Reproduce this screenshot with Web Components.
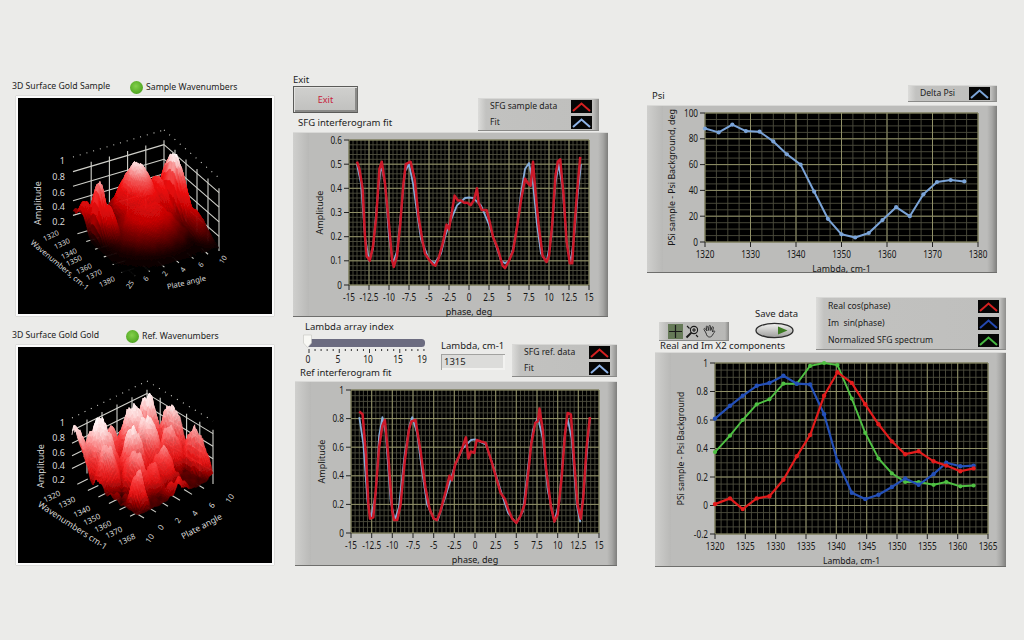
<!DOCTYPE html>
<html>
<head>
<meta charset="utf-8">
<title>SFG front panel</title>
<style>
    html, body { margin: 0; height: 100%; overflow: hidden; background: #ebebe9; }
    body { font: 9.5px "Noto Sans", sans-serif; color: #1c1c1c; }
    .head { display: flex; }
    .stack { display: flex; flex-direction: column; }
</style>
</head>
<body>
<front-panel>
    <div slot="left" class="stack">
        <surface-plot name="sample" heading="3D Surface Gold Sample" led="Sample Wavenumbers" style="--led-at: 118px"></surface-plot>
        <surface-plot name="ref" heading="3D Surface Gold Gold" led="Ref. Wavenumbers" style="--led-at: 114px; margin-top: 11px"></surface-plot>
    </div>
    <div slot="middle" class="stack">
        <div class="head" style="width: 306px; height: 58px; justify-content: space-between">
            <div class="stack">
                <panel-label>Exit</panel-label>
                <exit-button>Exit</exit-button>
                <panel-label style="margin: 4px 0 0 5px">SFG interferogram fit</panel-label>
            </div>
            <graph-legend items="SFG sample data:#d42020,Fit:#8fb4e8" style="width: 121px; height: 33px; margin-top: 24px"></graph-legend>
        </div>
        <xy-graph name="sfg" style="width: 315px; height: 185px"></xy-graph>
        <div class="head" style="margin: 2px 0 0 2px; width: 322px; height: 62px">
            <div class="stack" style="width: 146px">
                <panel-label style="margin: 2px 0 0 10px">Lambda array index</panel-label>
                <index-slider style="margin: 1px 0 0 8px"></index-slider>
                <panel-label style="margin: 2px 0 0 5px">Ref interferogram fit</panel-label>
            </div>
            <numeric-box label="Lambda, cm-1" value="1315" style="margin-top: 21px"></numeric-box>
            <graph-legend items="SFG ref. data:#d42020,Fit:#8fb4e8" style="width: 105px; height: 33px; margin: 25px 0 0 7px"></graph-legend>
        </div>
        <xy-graph name="ref" style="width: 322px; height: 185px; margin-left: 2px"></xy-graph>
    </div>
    <div slot="right" class="stack">
        <div class="head" style="width: 350px; height: 20px; justify-content: space-between; align-items: flex-end">
            <panel-label style="margin-left: 5px; position: relative; top: -3px">Psi</panel-label>
            <graph-legend items="Delta Psi:#7ba4d8" style="width: 89px; height: 17px; margin-bottom: 3px"></graph-legend>
        </div>
        <xy-graph name="psi" style="width: 350px; height: 168px"></xy-graph>
        <div class="head" style="margin: 24px 0 0 8px; width: 351px; height: 55px; justify-content: space-between">
            <div class="stack" style="justify-content: flex-end">
                <div class="head">
                    <graph-palette style="margin: 13px 0 0 4px"></graph-palette>
                    <save-toggle style="margin: 0 0 0 26px">Save data</save-toggle>
                </div>
                <panel-label style="margin: -1px 0 0 5px">Real and Im X2 components</panel-label>
            </div>
            <graph-legend items="Real cos(phase):#d42020,Im  sin(phase):#2448b0,Normalized SFG spectrum:#46b840" style="width: 190px; height: 53px"></graph-legend>
        </div>
        <xy-graph name="x2" style="width: 351px; height: 215px; margin-left: 8px"></xy-graph>
    </div>
</front-panel>

<script>
const RED = '#cc1a2a';
const LIGHT_BLUE = '#86add9';

function zip(xs, ys) {
    return xs.map((x, i) => [x, ys[i]]);
}

const sfgRed = [[-14,.51],[-13.7,.48],[-13.3,.4],[-13,.2],[-12.8,.12],[-12.4,.1],[-12,.16],[-11.6,.28],[-11.2,.48],[-10.9,.51],[-10.5,.42],[-10,.25],[-9.6,.1],[-9.4,.075],[-9,.12],[-8.6,.25],[-8.2,.42],[-7.9,.5],[-7.3,.51],[-6.8,.44],[-6.3,.28],[-5.8,.18],[-5.5,.13],[-5,.105],[-4.5,.085],[-4.2,.08],[-3.8,.11],[-3.3,.17],[-2.8,.25],[-2.5,.23],[-2.2,.29],[-1.8,.37],[-1.4,.35],[-1,.35],[-.6,.34],[-.2,.34],[.2,.33],[.6,.35],[1,.4],[1.2,.34],[1.6,.31],[2.2,.31],[2.6,.26],[3,.2],[3.6,.15],[4.2,.08],[4.5,.07],[5,.1],[5.5,.14],[6,.24],[6.5,.35],[7,.44],[7.4,.42],[7.7,.41],[8,.51],[8.3,.39],[8.7,.25],[9.2,.12],[9.7,.095],[10,.12],[10.4,.25],[10.8,.45],[11.1,.51],[11.4,.52],[11.8,.38],[12.2,.18],[12.6,.09],[12.9,.09],[13.2,.25],[13.5,.38],[13.9,.53]];
const sfgFit = [[-14,.5],[-13.5,.42],[-13,.2],[-12.5,.1],[-12,.15],[-11.5,.34],[-11,.5],[-10.5,.42],[-10,.2],[-9.5,.09],[-9,.14],[-8.5,.3],[-8,.47],[-7.5,.5],[-7,.42],[-6.5,.3],[-6,.19],[-5,.105],[-4.3,.09],[-3.5,.13],[-3,.2],[-2.5,.25],[-1.5,.33],[-.5,.36],[0,.362],[.5,.36],[1.5,.33],[2.5,.25],[3.2,.18],[4,.1],[4.5,.09],[5,.1],[5.5,.15],[6,.24],[6.5,.38],[7,.48],[7.5,.505],[8,.42],[8.5,.25],[9,.13],[9.7,.095],[10.3,.2],[10.8,.42],[11.2,.5],[11.7,.4],[12.2,.18],[12.7,.09],[13.2,.22],[13.6,.38],[14,.5]];
const refRed = [[-14,.85],[-13.6,.83],[-13.2,.55],[-12.9,.2],[-12.7,.1],[-12.3,.11],[-12,.3],[-11.6,.6],[-11.2,.75],[-10.9,.79],[-10.5,.55],[-10,.15],[-9.8,.09],[-9.4,.09],[-9,.2],[-8.5,.5],[-8,.72],[-7.7,.78],[-7.2,.79],[-6.6,.58],[-6,.32],[-5.5,.17],[-5,.1],[-4.6,.09],[-4.2,.15],[-3.5,.3],[-3.1,.4],[-2.8,.37],[-2.4,.48],[-2,.53],[-1.5,.6],[-1.1,.67],[-.8,.52],[-.5,.57],[-.1,.56],[.2,.65],[.7,.64],[1.3,.63],[2,.5],[2.5,.4],[3.1,.28],[3.6,.24],[4,.17],[4.5,.1],[5,.07],[5.5,.12],[6,.2],[6.5,.45],[6.8,.62],[7.3,.77],[7.6,.78],[7.8,.87],[8.2,.72],[8.6,.45],[9.2,.18],[9.6,.08],[10,.13],[10.5,.4],[10.9,.7],[11.2,.84],[11.6,.83],[12,.5],[12.4,.2],[12.8,.1],[13.1,.25],[13.5,.6],[13.9,.81]];
const refFit = [[-14,.81],[-13.5,.62],[-13,.22],[-12.6,.1],[-12,.28],[-11.6,.68],[-11.2,.81],[-10.8,.7],[-10.2,.22],[-9.7,.09],[-9.2,.18],[-8.5,.55],[-7.9,.76],[-7.6,.81],[-7,.7],[-6.4,.43],[-5.8,.2],[-5,.1],[-4.5,.09],[-3.5,.27],[-2.5,.46],[-1.5,.59],[-.5,.65],[0,.655],[.5,.64],[1.3,.62],[2.2,.47],[3.2,.28],[4,.14],[5,.07],[5.8,.15],[6.5,.5],[7,.72],[7.6,.81],[8.2,.66],[8.8,.3],[9.6,.08],[10.2,.22],[10.8,.66],[11.2,.8],[11.7,.66],[12.3,.2],[12.7,.08],[13.2,.32],[13.9,.81]];
const psi = zip([1320,1323,1326,1329,1332,1335,1338,1341,1344,1347,1350,1353,1356,1359,1362,1365,1368,1371,1374,1377],
    [88,85,91,86,85.5,78,68,60,39,18,6,3.5,7,17,27,20,37,46.5,48,47]);
const x2Xs = [195,240,278,320,358,400,440,480,522,562,605,645,685,725,765,805,850,888,930,970].map(p => 1320 + (p - 195) * 45 / 818);
const x2Green = zip(x2Xs, [.375,.49,.6,.71,.745,.855,.855,.98,1,.985,.75,.51,.33,.225,.165,.165,.145,.165,.135,.14]);
const x2Blue = zip(x2Xs, [.61,.7,.77,.84,.86,.91,.855,.85,.64,.31,.09,.045,.075,.13,.19,.145,.22,.3,.275,.28]);
const x2Red = zip(x2Xs, [.01,.05,-.025,.05,.065,.18,.345,.495,.77,.935,.86,.71,.57,.45,.36,.38,.31,.28,.24,.26]);

const GRAPHS = {
    sfg: {
        plot: [56, 7, 240, 145], x: [-15, 15, 2.5, .5], y: [0, .6, .1, .02],
        xlabel: 'phase, deg', ylabel: 'Amplitude', ylabelAt: 26, capSize: 9,
        series: [{ color: LIGHT_BLUE, width: 1.8, points: sfgFit }, { color: RED, width: 2.5, points: sfgRed }]
    },
    ref: {
        plot: [56, 8, 248, 143], x: [-15, 15, 2.5, .5], y: [0, 1, .2, .04],
        xlabel: 'phase, deg', ylabel: 'Amplitude', ylabelAt: 26, capSize: 9,
        series: [{ color: LIGHT_BLUE, width: 1.8, points: refFit }, { color: RED, width: 2.5, points: refRed }]
    },
    psi: {
        plot: [58, 7, 273, 129], x: [1320, 1380, 10, 2.5], y: [0, 100, 20, 5],
        xlabel: 'Lambda, cm-1', ylabel: 'PSi sample - Psi Background, deg', ylabelAt: 30, capSize: 8.8,
        series: [{ color: '#7ba4d8', width: 2, dot: 2.1, points: psi }]
    },
    x2: {
        plot: [60, 10, 273, 171], x: [1320, 1365, 5, 1], y: [-.2, 1, .2, .05],
        xlabel: 'Lambda, cm-1', ylabel: 'PSi sample - Psi Background', ylabelAt: 31, capSize: 8.6,
        series: [
            { color: '#4fc043', width: 1.9, dot: 2.1, points: x2Green },
            { color: '#2450b8', width: 2.2, dot: 2.2, points: x2Blue },
            { color: '#e21c1c', width: 2.2, dot: 2.2, points: x2Red }
        ]
    }
};

// surface geometry is in page pixels: L = left base corner, U/V = base edge vectors, H = height scale
const SURFACES = {
    sample: {
        box: [16, 96],
        L: [73, 230], U: [55, 48], V: [91, -27], H: 75, wall: 73,
        stops: [[0, 0, 0, 0], [.08, 26, 0, 0], [.2, 105, 0, 0], [.36, 205, 6, 6], [.54, 240, 20, 20], [.7, 244, 95, 95], [.84, 252, 215, 215], [.94, 255, 255, 255], [1, 255, 255, 255]],
        noise: .008, spikes: .025, floor: .015,
        peaks: [
            [.02, .02, .26, .12, .1], [.14, .05, .46, .1, .07], [.3, .11, .78, .12, .045],
            [.36, .17, .5, .14, .05], [.27, .55, .85, .2, .15], [.5, .52, .48, .22, .24],
            [.36, .9, .92, .2, .055], [.3, .76, .62, .2, .06], [.62, .93, .36, .2, .08]
        ],
        zText: [['1', 161], ['0.8', 177], ['0.6', 193], ['0.4', 207], ['0.2', 222]],
        zEnd: 65, amp: [41, 203],
        tick: 7.2, cap: 7.6,
        uText: [['1320', 52, 235], ['1330', 63, 243], ['1340', 70, 253], ['1350', 75, 260], ['1360', 85, 268], ['1370', 95, 274], ['1380', 108, 281]],
        uLabel: ['Wavenumbers, cm-1', 58, 264, 40],
        vText: [['25', 132, 283], ['6', 148, 277], ['2', 167, 272], ['4', 185, 268], ['6', 203, 263], ['10', 225, 258]],
        vLabel: ['Plate angle', 187, 282, -13]
    },
    ref: {
        box: [16, 346],
        L: [72, 482], U: [66, 40], V: [75, -37], H: 72, wall: 63,
        stops: [[0, 6, 0, 0], [.06, 50, 0, 0], [.14, 150, 4, 4], [.26, 232, 22, 22], [.4, 246, 60, 60], [.56, 250, 140, 140], [.72, 255, 222, 222], [.9, 255, 250, 250], [1, 255, 255, 255]],
        noise: .022, spikes: .05, floor: .16,
        peaks: [
            [.05, .02, .72, .14, .1], [.2, .2, .84, .15, .12], [.2, .65, .8, .13, .12], [.15, .88, .82, .13, .07],
            [.4, .99, .74, .16, .07], [.75, 1, .62, .16, .06], [.4, .12, .66, .1, .08], [.45, .42, .76, .1, .1],
            [.4, .65, .76, .14, .11], [.7, .6, .52, .1, .09], [.85, .13, .56, .07, .06], [.52, .85, .62, .11, .08],
            [.63, .3, .6, .13, .08], [.1, .42, .56, .1, .1], [.75, .42, .44, .09, .07], [.95, .55, .26, .07, .12]
        ],
        zText: [['1', 424], ['0.8', 439], ['0.6', 454], ['0.4', 467], ['0.2', 481]],
        zEnd: 65, amp: [44, 467],
        tick: 7.8, cap: 8.6,
        uText: [['1320', 53, 497], ['1330', 68, 503], ['1340', 83, 512], ['1350', 93, 520], ['1360', 104, 527], ['1370', 115, 533], ['1368', 128, 540]],
        uLabel: ['Wavenumbers cm-1', 71, 526, 33],
        vText: [['10', 152, 538], ['0', 163, 527], ['2', 180, 520], ['4', 197, 513], ['6', 214, 505], ['10', 232, 498]],
        vLabel: ['Plate angle', 203, 527, -28]
    }
};

class FrontPanel extends HTMLElement {
    constructor() {
        super();
        this.attachShadow({ mode: 'open' });
        this.shadowRoot.innerHTML = `
            <style>
                :host { display: grid; grid-template-columns: 281px 354px auto; padding-left: 12px; }
                .left { padding-top: 78px; }
                .middle { padding-top: 74px; }
                .right { padding-top: 85px; }
            </style>
            <div class="left"><slot name="left"></slot></div>
            <div class="middle"><slot name="middle"></slot></div>
            <div class="right"><slot name="right"></slot></div>
        `;
    }
}

class PanelLabel extends HTMLElement {
    constructor() {
        super();
        this.attachShadow({ mode: 'open' });
        this.shadowRoot.innerHTML = `
            <style>
                :host { display: block; height: 12px; line-height: 12px; white-space: nowrap; }
            </style>
            <slot></slot>
        `;
    }
}

class SurfacePlot extends HTMLElement {
    constructor() {
        super();
        this.attachShadow({ mode: 'open' });
    }

    heightAt(s, u, v) {
        let z = s.floor * (1 - u * .5);
        for (const [pu, pv, pz, su, sv] of s.peaks) {
            const d = ((u - pu) / su) ** 2 + ((v - pv) / sv) ** 2;
            z = Math.max(z, pz * Math.exp(-d / 2));
        }
        const h = Math.sin(u * 311.7 + v * 127.1) * 43758.5453;
        const r = h - Math.floor(h);
        const wob = Math.sin(u * 31 + 1.3) * Math.sin(v * 37 + .4) + Math.sin(u * 57 + v * 61) * .6;
        return Math.max(0, z + z * (r - .5) * s.spikes * 2 + wob * s.noise * (z > .1 ? 1.6 : .3));
    }

    colorAt(s, z) {
        const stops = s.stops;
        for (let i = 1; i < stops.length; i++) {
            if (z <= stops[i][0]) {
                const a = stops[i - 1], b = stops[i];
                const t = (z - a[0]) / (b[0] - a[0]);
                return [1, 2, 3].map(k => a[k] + (b[k] - a[k]) * t);
            }
        }
        return stops[stops.length - 1].slice(1);
    }

    project(s, u, v, z) {
        return [s.L[0] + s.U[0] * u + s.V[0] * v, s.L[1] + s.U[1] * u + s.V[1] * v - s.H * z];
    }

    getSurface(s) {
        const N = 72;
        const grid = [];
        for (let i = 0; i <= N; i++) {
            grid.push([]);
            for (let j = 0; j <= N; j++) grid[i].push(this.heightAt(s, i / N, j / N));
        }
        let out = '';
        for (let j = N - 1; j >= 0; j--) {
            for (let i = 0; i < N; i++) {
                const z = (grid[i][j] + grid[i + 1][j] + grid[i][j + 1] + grid[i + 1][j + 1]) / 4;
                const pts = [[i, j], [i + 1, j], [i + 1, j + 1], [i, j + 1]]
                    .map(([a, b]) => this.project(s, a / N, b / N, grid[a][b]).map(n => n.toFixed(1)).join(','));
                // slopes facing the viewer fall a little darker
                const slope = (grid[i][j] - grid[i + 1][j]) * N * .04;
                const shade = Math.min(1.05, Math.max(.72, 1 - slope * .35));
                const c = this.colorAt(s, z).map((n, k) => Math.round(k === 0 ? n * (shade * .35 + .65) : n * shade));
                const fill = `rgb(${c.join(',')})`;
                out += `<polygon points="${pts.join(' ')}" fill="${fill}" stroke="${fill}" stroke-width=".5"/>`;
            }
        }
        return out;
    }

    getBox(s) {
        const top = (u, v) => {
            const p = this.project(s, u, v, 0);
            return [p[0], p[1] - s.wall];
        };
        const base = (u, v) => this.project(s, u, v, 0);
        const seg = (a, b, extra = '') => `<line x1="${a[0]}" y1="${a[1]}" x2="${b[0]}" y2="${b[1]}" ${extra}/>`;
        const dotted = 'stroke-dasharray="1 6" stroke-width="1.3"';
        const drop = s.wall / 5;
        let out = '';
        // back walls: u = 0 runs from the left corner to the far corner, v = 1 from the far corner to the right
        for (let t = .2; t <= 1.01; t += .2) {
            out += seg([top(0, t)[0], top(0, t)[1] + drop * .7], base(0, t));
            out += seg([top(t, 1)[0], top(t, 1)[1] + drop * .7], base(t, 1));
        }
        for (let k = 1; k < 5; k++) {
            const d = k * drop;
            const a = top(0, 0), b = top(0, 1), c = top(1, 1);
            out += seg([a[0], a[1] + d], [b[0], b[1] + d]);
            out += seg([b[0], b[1] + d], [c[0], c[1] + d]);
        }
        out += seg(top(0, 0), top(0, 1), dotted + ' stroke="#bbb"');
        out += seg(top(0, 1), top(1, 1), dotted + ' stroke="#bbb"');
        // short floor dashes along both front edges
        for (let t = .08; t < 1; t += .16) {
            out += seg(base(t, 0), base(t, .14));
            out += seg(base(1, t), base(.88, t));
        }
        return out;
    }

    getLabels(s) {
        let out = '';
        for (const [t, y] of s.zText) {
            out += `<text x="${s.zEnd}" y="${y + 3}" text-anchor="end">${t}</text>`;
        }
        out += `<text transform="translate(${s.amp[0]} ${s.amp[1]}) rotate(-90)" text-anchor="middle" font-size="8">Amplitude</text>`;
        for (const [t, x, y] of s.uText) {
            out += `<text transform="translate(${x} ${y + 3}) rotate(-25)" text-anchor="middle" style="font-size:${s.tick}px">${t}</text>`;
        }
        for (const [t, x, y] of s.vText) {
            out += `<text transform="translate(${x} ${y + 3}) rotate(-55)" text-anchor="middle" style="font-size:${s.tick}px">${t}</text>`;
        }
        for (const [t, x, y, a] of [s.uLabel, s.vLabel]) {
            out += `<text transform="translate(${x} ${y + 3}) rotate(${a})" text-anchor="middle" style="font-size:${s.cap}px">${t}</text>`;
        }
        return out;
    }

    connectedCallback() {
        const s = SURFACES[this.getAttribute('name')];
        this.shadowRoot.innerHTML = `
            <style>
                :host { display: block; width: 262px; font-size: 8.7px; }
                .top { display: flex; align-items: center; height: 18px; line-height: 12px; white-space: nowrap; }
                .title { width: var(--led-at); position: relative; top: -1px; }
                .led {
                    width: 13px; height: 13px; border-radius: 50%; margin-right: 3px;
                    background: radial-gradient(circle at 45% 40%, #84d04c, #58ad28 60%, #3f8a1c);
                }
                .screen {
                    margin-left: 4px; width: 254px; height: 216px; border: 2px solid #fbfbfb;
                    box-shadow: 0 0 1px #9a9a98; background: #000;
                }
                svg { display: block; }
                text { font: 9px "Noto Sans", sans-serif; fill: #d8d8d8; }
                .box line { stroke: #d0d0ca; stroke-width: 1.1; }
            </style>
            <div class="top">
                <span class="title">${this.getAttribute('heading')}</span>
                <span class="led"></span>
                <span>${this.getAttribute('led')}</span>
            </div>
            <div class="screen">
                <svg width="254" height="216" viewBox="${s.box[0] + 2} ${s.box[1] + 2} 254 216">
                    <defs><filter id="soft" x="-5%" y="-5%" width="110%" height="110%"><feGaussianBlur stdDeviation=".55"/></filter></defs>
                    <g class="box">${this.getBox(s)}</g>
                    <g filter="url(#soft)">${this.getSurface(s)}</g>
                    <g>${this.getLabels(s)}</g>
                </svg>
            </div>
        `;
    }
}

class XyGraph extends HTMLElement {
    constructor() {
        super();
        this.attachShadow({ mode: 'open' });
    }

    getTicks(from, to, step) {
        const out = [];
        const n = Math.round((to - from) / step);
        for (let i = 0; i <= n; i++) out.push(+(from + i * step).toFixed(4));
        return out;
    }

    getGrid(g, sx, sy, l, t, w, h) {
        const [xmin, xmax, xmaj, xmin2] = g.x;
        const [ymin, ymax, ymaj, ymin2] = g.y;
        let minor = '', major = '', ticks = '', labels = '';
        for (const x of this.getTicks(xmin, xmax, xmin2)) {
            minor += `M${sx(x).toFixed(1)} ${t}v${h}`;
        }
        for (const y of this.getTicks(ymin, ymax, ymin2)) {
            minor += `M${l} ${sy(y).toFixed(1)}h${w}`;
        }
        // number labels are a condensed face in the reference, so squeeze them sideways
        for (const x of this.getTicks(xmin, xmax, xmaj)) {
            major += `M${sx(x).toFixed(1)} ${t}v${h}`;
            ticks += `M${sx(x).toFixed(1)} ${t + h}v5`;
            labels += `<text transform="translate(${sx(x).toFixed(1)} ${t + h + 16}) scale(.78 1)" text-anchor="middle">${x}</text>`;
        }
        for (const y of this.getTicks(ymin, ymax, ymaj)) {
            major += `M${l} ${sy(y).toFixed(1)}h${w}`;
            ticks += `M${l} ${sy(y).toFixed(1)}h-5`;
            labels += `<text transform="translate(${l - 7} ${(sy(y) + 3.5).toFixed(1)}) scale(.78 1)" text-anchor="end">${y}</text>`;
        }
        return `
            <rect x="${l}" y="${t}" width="${w}" height="${h}" fill="#000"/>
            <path d="${minor}" stroke="#4e4e3e" stroke-width=".9" fill="none"/>
            <path d="${major}" stroke="#8f8f66" stroke-width="1" fill="none"/>
            <path d="${ticks}" stroke="#222" stroke-width="1" fill="none"/>
            ${labels}
        `;
    }

    getSeries(g, sx, sy) {
        return g.series.map(s => {
            const pts = s.points.map(([x, y]) => [sx(x).toFixed(1), sy(y).toFixed(1)]);
            const dots = s.dot ? pts.map(p => `<circle cx="${p[0]}" cy="${p[1]}" r="${s.dot}" fill="${s.color}"/>`).join('') : '';
            return `<polyline points="${pts.map(p => p.join(',')).join(' ')}" fill="none" stroke="${s.color}"
                stroke-width="${s.width}" stroke-linejoin="round"/>${dots}`;
        }).join('');
    }

    connectedCallback() {
        const g = GRAPHS[this.getAttribute('name')];
        const [l, t, w, h] = g.plot;
        const sx = x => l + (x - g.x[0]) / (g.x[1] - g.x[0]) * w;
        const sy = y => t + h - (y - g.y[0]) / (g.y[1] - g.y[0]) * h;
        this.shadowRoot.innerHTML = `
            <style>
                :host { display: block; }
                .frame {
                    height: 100%; box-sizing: border-box; border-top: 1px solid #d9d9d7; border-bottom: 1px solid #6e6e6c;
                    background:
                        linear-gradient(to right, #cfcfcd 0, #b9b9b7 16px, transparent 16px),
                        linear-gradient(to left, #7e7e7c 0, #a6a6a4 5px, #bcbcba 10px, transparent 10px),
                        #bcbcba;
                }
                svg { display: block; width: 100%; height: 100%; overflow: visible; }
                text { font: 10.5px "Noto Sans", sans-serif; fill: #161616; }
                .cap { font-size: ${g.capSize}px; }
            </style>
            <div class="frame">
                <svg>
                    ${this.getGrid(g, sx, sy, l, t, w, h)}
                    <g>${this.getSeries(g, sx, sy)}</g>
                    <text class="cap" x="${l + w / 2}" y="${t + h + 30}" text-anchor="middle">${g.xlabel}</text>
                    <text class="cap" transform="translate(${l - g.ylabelAt} ${t + h / 2}) rotate(-90)" text-anchor="middle">${g.ylabel}</text>
                </svg>
            </div>
        `;
    }
}

class GraphLegend extends HTMLElement {
    constructor() {
        super();
        this.attachShadow({ mode: 'open' });
    }

    connectedCallback() {
        const rows = this.getAttribute('items').split(',').map(item => {
            const [name, color] = item.split(':');
            return `
                <div class="row">
                    <span>${name.replace('  ', '&nbsp;&nbsp;')}</span>
                    <svg width="21" height="13"><rect width="21" height="13" fill="#060606"/>
                        <polyline points="2,11 10.5,3.5 19,11" fill="none" stroke="${color}" stroke-width="2"/></svg>
                </div>`;
        }).join('');
        this.shadowRoot.innerHTML = `
            <style>
                :host { display: block; flex: none; box-sizing: border-box; font-size: 8.6px; }
                .body {
                    height: 100%; box-sizing: border-box; display: flex; flex-direction: column; justify-content: space-around;
                    padding: 0 7px 0 12px; border-bottom: 1px solid #8a8a88; border-top: 1px solid #d8d8d6;
                    background: linear-gradient(to right, #dcdcda, #c2c2c0 8px, #bfbfbd calc(100% - 6px), #8f8f8d);
                }
                .row { display: flex; justify-content: space-between; align-items: center; line-height: 13px; }
                svg { display: block; }
            </style>
            <div class="body">${rows}</div>
        `;
    }
}

class ExitButton extends HTMLElement {
    constructor() {
        super();
        this.attachShadow({ mode: 'open' });
        this.shadowRoot.innerHTML = `
            <style>
                :host {
                    display: flex; align-items: center; justify-content: center; box-sizing: border-box;
                    width: 65px; height: 27px; color: #c8203c; font-size: 9px;
                    border: 1px solid #5a5a58; border-right-color: #6a6a68;
                    box-shadow: inset 1px 1px 0 #e2e2e0, inset -2px -2px 0 #8a8a88;
                    background: linear-gradient(#d0d0ce, #c0c0be);
                }
            </style>
            <slot></slot>
        `;
    }
}

class IndexSlider extends HTMLElement {
    constructor() {
        super();
        this.attachShadow({ mode: 'open' });
    }

    connectedCallback() {
        let ticks = '';
        for (let i = 0; i < 20; i++) {
            const x = 6 + i * 6.05;
            ticks += `<line x1="${x}" x2="${x}" y1="15" y2="${i % 5 ? 17 : 19}" stroke="#333"/>`;
        }
        const nums = [[0, 5], [5, 35], [10, 65], [15, 95], [19, 119]]
            .map(([n, x]) => `<text transform="translate(${x} 29) scale(.85 1)" text-anchor="middle">${n}</text>`).join('');
        this.shadowRoot.innerHTML = `
            <style>
                :host { display: block; width: 124px; height: 31px; }
                svg { display: block; }
                text { font: 10px "Noto Sans", sans-serif; fill: #1c1c1c; }
            </style>
            <svg width="124" height="31">
                <rect x="3" y="5" width="119" height="8" rx="3.5" fill="#6c6c80"/>
                ${ticks}${nums}
                <path d="M0.5 1h8v8l-4 4.5-4-4.5z" fill="#f8f8f4" stroke="#c4c4c0" stroke-width=".6"/>
            </svg>
        `;
    }
}

class NumericBox extends HTMLElement {
    constructor() {
        super();
        this.attachShadow({ mode: 'open' });
    }

    connectedCallback() {
        this.shadowRoot.innerHTML = `
            <style>
                :host { display: block; flex: none; width: 64px; }
                .name { height: 12px; line-height: 12px; margin-bottom: 2px; white-space: nowrap; }
                .value {
                    height: 16px; line-height: 16px; box-sizing: border-box; padding-left: 3px;
                    background: #dcdcda; box-shadow: inset 1px 1px 0 #a2a2a0, inset -2px -2px 0 #f2f2f0;
                }
            </style>
            <div class="name">${this.getAttribute('label')}</div>
            <div class="value">${this.getAttribute('value')}</div>
        `;
    }
}

class GraphPalette extends HTMLElement {
    constructor() {
        super();
        this.attachShadow({ mode: 'open' });
        this.shadowRoot.innerHTML = `
            <style>
                :host {
                    display: flex; gap: 2px; align-items: center; box-sizing: border-box; flex: none;
                    width: 70px; height: 19px; padding-left: 9px;
                    background: linear-gradient(to right, #d4d4d2, #bcbcba 8px, #b8b8b6 calc(100% - 4px), #8a8a88);
                    border-bottom: 1px solid #8a8a88;
                }
                svg { display: block; }
            </style>
            <svg width="15" height="15" viewBox="0 0 15 15"><rect width="15" height="15" fill="#667a58"/>
                <path d="M7.5 1v13M1 7.5h13" stroke="#1a1a1a" stroke-width="1.2"/></svg>
            <svg width="15" height="15" viewBox="0 0 15 15" fill="none" stroke="#1a1a1a" stroke-width="1.1">
                <circle cx="9" cy="6" r="3.6"/><path d="M6.4 8.6L1.5 13.5" stroke-width="2"/><path d="M9 4v4M7 6h4"/>
                <path d="M2 2l2.5 2.5M13 13l-2-2"/></svg>
            <svg width="15" height="15" viewBox="0 0 15 15" fill="none" stroke="#333" stroke-width="1" stroke-linejoin="round">
                <path d="M4 9L2 5.5c-.4-1 .8-1.5 1.4-.7L5 7 4.2 3c-.2-1 1.2-1.3 1.5-.3L6.8 6.5 7 2.2c0-1 1.5-1 1.5 0L8.8 6.5 10 3.2c.3-.9 1.6-.5 1.4.4L10.4 8c.4-.6 1.8-1.5 2.3-.8.4.5-1.2 2-2.2 3.8-.6 1.2-1.5 2-3 2-1.8 0-2.8-1.2-3.5-4z"/></svg>
        `;
    }
}

class SaveToggle extends HTMLElement {
    constructor() {
        super();
        this.attachShadow({ mode: 'open' });
        this.shadowRoot.innerHTML = `
            <style>
                :host { display: block; flex: none; }
                .name { height: 12px; line-height: 12px; margin-top: -1px; white-space: nowrap; }
                svg { display: block; margin-top: 2px; }
            </style>
            <div class="name"><slot></slot></div>
            <svg width="40" height="17" viewBox="0 0 40 17">
                <defs><linearGradient id="pill" x1="0" y1="0" x2="0" y2="1">
                    <stop offset="0" stop-color="#f4f4f2"/><stop offset="1" stop-color="#9c9c9a"/>
                </linearGradient></defs>
                <ellipse cx="19.5" cy="8.5" rx="18.5" ry="7.2" fill="url(#pill)" stroke="#2c2c2c" stroke-width="1.3"/>
                <path d="M23 4.5l9.5 4-9.5 4z" fill="#3c7a22"/>
            </svg>
        `;
    }
}

customElements.define('front-panel', FrontPanel);
customElements.define('panel-label', PanelLabel);
customElements.define('surface-plot', SurfacePlot);
customElements.define('xy-graph', XyGraph);
customElements.define('graph-legend', GraphLegend);
customElements.define('exit-button', ExitButton);
customElements.define('index-slider', IndexSlider);
customElements.define('numeric-box', NumericBox);
customElements.define('graph-palette', GraphPalette);
customElements.define('save-toggle', SaveToggle);
</script>
</body>
</html>
